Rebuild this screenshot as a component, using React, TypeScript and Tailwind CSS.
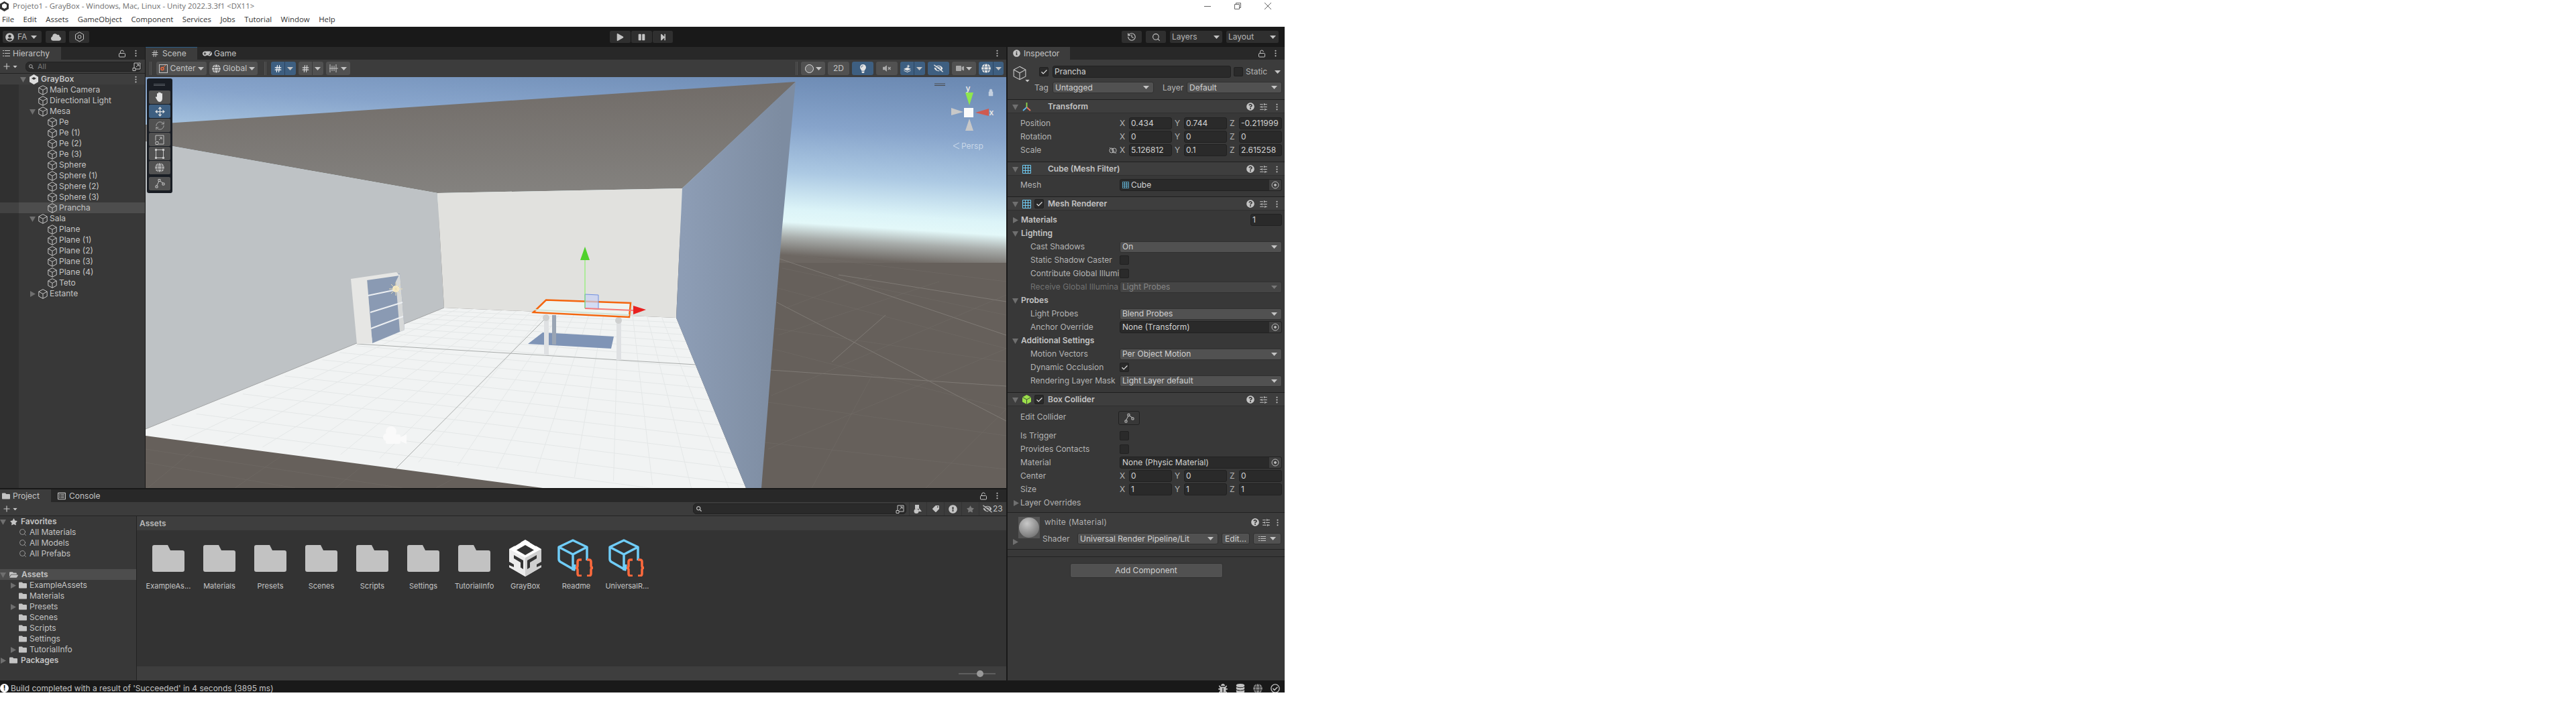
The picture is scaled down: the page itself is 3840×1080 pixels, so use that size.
import React from "react";
import {
  FaBug, FaCloud, FaDatabase, FaExclamationCircle, FaEyeSlash, FaFolder, FaFolderOpen,
  FaGamepad, FaGlobe, FaInfoCircle, FaLightbulb, FaPause, FaPlay, FaQuestionCircle, FaRegCheckCircle,
  FaRegListAlt, FaSearch, FaStar, FaStepForward, FaTag, FaUserCircle, FaVideo, FaVolumeMute,
} from "react-icons/fa";
import { Check, EllipsisVertical, Hash, History, LockOpen, Move, Plus, RefreshCw, Search, SlidersHorizontal } from "lucide-react";

const Caret = ({ className = "" }: { className?: string }) => (
  <svg width="9" height="5" viewBox="0 0 9 5" className={`shrink-0 ${className}`}>
    <path d="M0 0h9L4.5 5z" fill="#c4c4c4" />
  </svg>
);

const Tri = ({ open = true, className = "" }: { open?: boolean; className?: string }) => (
  <svg width="9" height="9" viewBox="0 0 9 9" className={`shrink-0 ${className}`}>
    <path d={open ? "M0 1h9L4.5 9z" : "M1 0l8 4.5L1 9z"} fill="#6f6f6f" />
  </svg>
);

const Cube = ({ color = "#c4c4c4" }: { color?: string }) => (
  <svg width="14" height="15" viewBox="0 0 14 15" className="shrink-0" fill="none" stroke={color} strokeWidth="1">
    <path d="M7 .7l6.2 3.3v7L7 14.3.8 11V4zM.8 4L7 7.4 13.2 4M7 7.4v6.9" />
  </svg>
);

const GridIcon = ({ size = 13 }: { size?: number }) => (
  <svg width={size} height={size} viewBox="0 0 13 13" fill="none" stroke="#6ecbf2" strokeWidth="1" className="shrink-0">
    <path d="M.5.5h12v12H.5zM4.5.5v12M8.5.5v12M.5 4.5h12M.5 8.5h12" />
  </svg>
);

const ExpandIcon = () => (
  <svg width="13" height="13" viewBox="0 0 13 13" fill="none" stroke="#c4c4c4" strokeWidth="1">
    <path d="M3 8V1h9v9H5M6 7l4-4M7 3h3v3M1 8.500h4v4H1z" />
  </svg>
);

const ToolNodes = () => (
  <svg width="16" height="16" viewBox="0 0 16 16" fill="none" stroke="#c4c4c4" strokeWidth="1">
    <path d="M2 14v-3h3v3zM12 10V7h3v3zM6 1.500h3v3H6zM3.500 11L7 4.500M9 4.500L13 7" />
  </svg>
);

const Target = () => (
  <svg width="12" height="12" viewBox="0 0 12 12" fill="none" stroke="#b8b8b8" strokeWidth="1">
    <circle cx="6" cy="6" r="5" />
    <circle cx="6" cy="6" r="1.500" fill="#b8b8b8" />
  </svg>
);

const Sep = () => <div className="w-[3px] h-[20px] border-x border-[#555]" />;

const TB = ({ w, active, children }: { w: string; active?: boolean; children: React.ReactNode }) => (
  <div className={`${w} ${active ? "bg-[#3e5f81]" : "bg-[#515151]"} h-[20px] rounded-[3px] flex items-center justify-center gap-[3px] text-[#c4c4c4] text-[12px] shrink-0`}>
    {children}
  </div>
);

const TopBtn = ({ w, children }: { w: string; children: React.ReactNode }) => (
  <div className={`${w} h-[18px] bg-[#2f2f2f] rounded-[2px] flex items-center text-[#b5b5b5] text-[12px] shrink-0`}>{children}</div>
);

const TitleBar = () => (
  <div className="h-[40px] bg-white border-b border-[#f0f0f0] shrink-0">
    <div className="h-[18px] flex items-center">
      <svg width="13" height="15" viewBox="0 0 13 15" className="shrink-0">
        <path d="M6.500 0L13 3.700v7.600L6.500 15 0 11.300V3.700z" fill="#333" />
        <path d="M6.500 3L10 5v4L6.500 11 3 9V5z" fill="#fff" />
      </svg>
      <span className="ml-[6px] text-[11.4px] text-[#6e6e6e] font-['Open_Sans',sans-serif]">Projeto1 - GrayBox - Windows, Mac, Linux - Unity 2022.3.3f1 &lt;DX11&gt;</span>
      <div className="ml-auto flex items-center w-[120px] gap-[35px]">
        <div className="w-[10px] h-px bg-[#666]" />
        <svg width="10" height="10" viewBox="0 0 10 10" fill="none" stroke="#666"><path d="M.5 2.500h7v7h-7zM2.500 2.500v-2h7v7h-2" /></svg>
        <svg width="10" height="10" viewBox="0 0 10 10" fill="none" stroke="#666"><path d="M0 0l10 10M10 0L0 10" /></svg>
      </div>
    </div>
    <div className="h-[21px] flex items-center gap-[13.500px] pl-[3px] text-[11.4px] text-[#333] font-['Open_Sans',sans-serif]">
      {["File", "Edit", "Assets", "GameObject", "Component", "Services", "Jobs", "Tutorial", "Window", "Help"].map((m) => (
        <span key={m}>{m}</span>
      ))}
    </div>
  </div>
);

const MainToolbar = () => (
  <div className="h-[30px] bg-[#191919] flex items-center pl-[4px] pr-[9px] shrink-0">
    <TopBtn w="w-[58px] px-[4px] gap-[5px]"><FaUserCircle size={13} color="#c4c4c4" /><span>FA</span><Caret className="ml-[1px]" /></TopBtn>
    <div className="w-[6px]" />
    <TopBtn w="w-[30px] justify-center"><FaCloud size={15} color="#c4c4c4" /></TopBtn>
    <div className="w-[5px]" />
    <TopBtn w="w-[30px] justify-center">
      <svg width="15" height="16" viewBox="0 0 15 16" fill="none" stroke="#c4c4c4"><path d="M7.500 1l6 3.500v7l-6 3.500-6-3.500v-7z" /><circle cx="7.500" cy="8" r="2.500" /></svg>
    </TopBtn>
    <div className="flex ml-[776px] gap-px">
      <TopBtn w="w-[31px] justify-center"><FaPlay size={11} color="#c4c4c4" /></TopBtn>
      <TopBtn w="w-[31px] justify-center"><FaPause size={11} color="#c4c4c4" /></TopBtn>
      <TopBtn w="w-[30px] justify-center"><FaStepForward size={11} color="#c4c4c4" /></TopBtn>
    </div>
    <div className="ml-auto flex gap-[6px]">
      <TopBtn w="w-[30px] justify-center"><History size={14} color="#c4c4c4" /></TopBtn>
      <TopBtn w="w-[30px] justify-center"><Search size={13} color="#c4c4c4" /></TopBtn>
      <TopBtn w="w-[78px] px-[3px] justify-between"><span>Layers</span><Caret className="mr-[1px]" /></TopBtn>
      <TopBtn w="w-[78px] px-[3px] justify-between"><span>Layout</span><Caret className="mr-[1px]" /></TopBtn>
    </div>
  </div>
);

const tree: [string, number, boolean?][] = [
  ["Main Camera", 1], ["Directional Light", 1], ["Mesa", 1, true], ["Pe", 2], ["Pe (1)", 2], ["Pe (2)", 2], ["Pe (3)", 2],
  ["Sphere", 2], ["Sphere (1)", 2], ["Sphere (2)", 2], ["Sphere (3)", 2], ["Prancha", 2], ["Sala", 1, true],
  ["Plane", 2], ["Plane (1)", 2], ["Plane (2)", 2], ["Plane (3)", 2], ["Plane (4)", 2], ["Teto", 2], ["Estante", 1, false],
];

const Hierarchy = () => (
  <div className="w-[216px] bg-[#383838] flex flex-col shrink-0">
    <div className="h-[19px] bg-[#282828] flex items-center shrink-0">
      <div className="w-[91px] h-full bg-[#3c3c3c] flex items-center gap-[4px] pl-[4px] text-[12px] text-[#c4c4c4]">
        <svg width="11" height="11" viewBox="0 0 11 11" stroke="#c4c4c4"><path d="M0 1.500h2M3 1.500h8M0 5.500h2M3 5.500h8M0 9.500h2M3 9.500h8" /></svg>
        Hierarchy
      </div>
      <div className="ml-auto flex items-center pr-[7px] gap-[8px]">
        <LockOpen size={12} color="#c4c4c4" />
        <EllipsisVertical size={13} color="#c4c4c4" />
      </div>
    </div>
    <div className="h-[21px] bg-[#3c3c3c] flex items-center pl-[3px] border-b border-[#232323] shrink-0">
      <Plus size={14} color="#c4c4c4" strokeWidth={2} />
      <Caret className="ml-[1px] scale-75" />
      <div className="ml-[11px] w-[173px] h-[15px] bg-[#2a2a2a] border border-[#212121] rounded-[6px] flex items-center pl-[4px] text-[11px] text-[#777]">
        <FaSearch size={7} color="#999" /><span className="ml-[6px]">All</span>
        <div className="ml-auto"><ExpandIcon /></div>
      </div>
    </div>
    <div className="h-[16px] bg-[#3e3e3e] flex items-center pl-[30px] text-[12px] font-semibold text-[#c4c4c4] shrink-0">
      <Tri />
      <svg width="13" height="15" viewBox="0 0 13 15" className="ml-[5px]"><path d="M6.500 0L13 3.700v7.600L6.500 15 0 11.300V3.700z" fill="#ddd" /><path d="M6.500 4L10 6 6.500 8 3 6z" fill="#383838" /></svg>
      <span className="ml-[4px]">GrayBox</span>
      <EllipsisVertical size={13} color="#c4c4c4" className="ml-auto mr-[7px]" />
    </div>
    {tree.map(([name, depth, open]) => {
      const sel = name === "Prancha";
      return (
        <div key={name} className="h-[16px] flex shrink-0 text-[12px] text-[#c4c4c4]">
          <div className={`w-[28px] ${sel ? "bg-[#424242]" : "bg-[#303030]"}`} />
          <div className={`flex-1 flex items-center ${sel ? "bg-[#4d4d4d]" : ""} ${depth === 1 ? "pl-[29px]" : "pl-[43px]"} relative`}>
            {open !== undefined && <Tri open={open} className="absolute left-[16px] top-[4px]" />}
            <Cube />
            <span className="ml-[3px]">{name}</span>
          </div>
        </div>
      );
    })}
    <div className="flex-1 flex">
      <div className="w-[28px] bg-[#303030]" />
    </div>
  </div>
);

const floorA = Array.from({ length: 17 }, (_, i) => {
  const t = (i + 1) / 18;
  const t2 = t * t * 0.6 + t * 0.4;
  return [662 - 445 * t2, 459 + 191 * t2, 1008 + 122 * t2, 474 + 300 * t2];
});
const floorB = Array.from({ length: 15 }, (_, i) => {
  const t = (i + 1) / 16;
  return [662 + 346 * t, 459 + 15 * t, 217 + 930 * t, 650 + 90 * t];
});

const SceneDrawing = () => (
  <svg viewBox="217 115 1283 613" width="1283" height="613" className="block">
    <defs>
      <linearGradient id="sky" gradientUnits="userSpaceOnUse" x1="1340" y1="115" x2="1323" y2="390">
        <stop offset="0" stopColor="#6c8ab3" />
        <stop offset="0.3" stopColor="#87a4cb" />
        <stop offset="0.55" stopColor="#acc9e3" />
        <stop offset="0.75" stopColor="#dcf4f8" />
        <stop offset="0.82" stopColor="#e3f8f9" />
        <stop offset="0.9" stopColor="#a9aeac" />
        <stop offset="1" stopColor="#6d6762" />
      </linearGradient>
      <linearGradient id="ceil" gradientUnits="userSpaceOnUse" x1="0" y1="122" x2="0" y2="288">
        <stop offset="0" stopColor="#716c68" />
        <stop offset="1" stopColor="#84827f" />
      </linearGradient>
      <linearGradient id="rwall" gradientUnits="userSpaceOnUse" x1="1017" y1="0" x2="1166" y2="0">
        <stop offset="0" stopColor="#8d9db5" />
        <stop offset="1" stopColor="#7d8ca1" />
      </linearGradient>
      <clipPath id="floorClip"><path d="M217 640L662 459 1008 474 1112 728H809L217 650z" /></clipPath>
    </defs>
    <rect x="217" y="115" width="1283" height="613" fill="url(#sky)" />
    <rect x="217" y="392" width="1283" height="336" fill="#66605b" />
    <g stroke="#7f7a75" strokeWidth="1">
      <path d="M1158 451L1500 628M1149 552L1500 576M1162 386L1500 500M1250 410L1500 450M1320 470L1240 540" fill="none" />
    </g>
    <g stroke="#76716c" strokeWidth="1" opacity="0.4" fill="none">
      <path d="M1166 400L1500 470M1160 430L1500 520M1155 490L1500 540M1150 520L1500 610M1145 600L1500 650M1140 660L1500 700M1180 380L1500 420M1300 410L1170 460M1400 420L1160 500M1500 440L1150 590M1500 520L1145 670M1500 610L1380 728M1300 560L1210 728" />
      <path d="M217 670L600 728M217 690L440 728M300 662L220 728M420 680L350 728M540 695L500 728M680 712L650 728" />
    </g>
    <path d="M217 186L1186 122 1017 281 652 288 217 211z" fill="url(#ceil)" />
    <path d="M217 211L652 288 662 459 217 640z" fill="#bec2c5" />
    <path d="M652 288L1017 281 1008 474 662 459z" fill="#e1e1de" />
    <path d="M217 640L662 459 1008 474 1112 728H809L217 650z" fill="#f1f3f3" />
    <path d="M1186 122L1017 281 1008 474 1112 728H1135L1166 339z" fill="url(#rwall)" />
    <g clipPath="url(#floorClip)" stroke="#e4e7e7" strokeWidth="1">
      {floorA.map((l, i) => <line key={i} x1={l[0]} y1={l[1]} x2={l[2]} y2={l[3]} />)}
      {floorB.map((l, i) => <line key={i} x1={l[0]} y1={l[1]} x2={l[2]} y2={l[3]} />)}
      <path d="M532 513L1037 544M812 476L590 699L560 728" stroke="#a9acab" fill="none" />
    </g>
    <path d="M217 640L662 459" stroke="#a7a9aa" fill="none" />
    {/* shelf */}
    <path d="M547 414L596 408 603 492 555 512z" fill="#8a9ab3" />
    <path d="M596 408L603 492 596 495 590 420z" fill="#d6d8d8" />
    <path d="M523 416L591 406 596 411 547 418 555 512 532 513z" fill="#e6e6e4" />
    <path d="M548 441L596 431M552 466L600 451M553 490L601 472" stroke="#eceff2" strokeWidth="2" fill="none" />
    <circle cx="590" cy="431" r="5" fill="#fbeec9" />
    <path d="M590 421v20M580 431h20M583 424l14 14M597 424l-14 14" stroke="#e8dcb4" strokeWidth="1" />
    {/* table */}
    <path d="M809 496L915 502 911 520 787 513z" fill="#7f94b6" />
    <path d="M823 470h6v44h-6z" fill="#9aa5b4" />
    <path d="M811 476h7v54h-7zM919 480h7v57h-7z" fill="#dfe1e3" />
    <circle cx="814" cy="474" r="5" fill="#cfd0d0" />
    <circle cx="922" cy="478" r="5" fill="#cfd0d0" />
    <path d="M814 447.500L940 452 938 473 795 466z" fill="#eef4f0" stroke="#f4660f" strokeWidth="2.500" />
    <path d="M796 462L938 470" stroke="#d3e2d6" strokeWidth="2" fill="none" />
    <path d="M872 439L892 440V461L872 460z" fill="#c8d2f5" fillOpacity="0.7" stroke="#6f8fe0" strokeWidth="1" />
    <path d="M872 388V460" stroke="#7cf25a" strokeWidth="1" />
    <path d="M872 368L879 388H865z" fill="#4fd12c" />
    <path d="M872 460L944 463" stroke="#f47a7a" strokeWidth="2" />
    <path d="M963 462L944 456V469z" fill="#e8201f" />
    {/* camera gizmo */}
    <g fill="#fafafa">
      <circle cx="583" cy="644" r="8" />
      <circle cx="577" cy="652" r="6" />
      <rect x="575" y="648" width="22" height="14" rx="2" />
      <path d="M597 652l9-4v14l-9-4z" />
    </g>
    {/* orientation gizmo */}
    <path d="M1393 125h16M1393 127.500h16" stroke="#4a4a4a" strokeWidth="1" />
    <path d="M1439 138H1451L1445 157z" fill="#8fe84d" />
    <path d="M1474 162V173L1454 168z" fill="#cf5a50" />
    <path d="M1418 161V172L1436 167z" fill="#c8c8c8" />
    <path d="M1439 195H1451L1445 177z" fill="#c8c8c8" />
    <rect x="1437" y="161" width="14" height="14" fill="#fafafa" />
    <text x="1443" y="136" fontSize="12" fill="#e6e6e6" fontWeight="600" textAnchor="middle" fontFamily="Inter, sans-serif">y</text>
    <text x="1478" y="172" fontSize="12" fill="#e6e6e6" fontWeight="600" textAnchor="middle" fontFamily="Inter, sans-serif">x</text>
    <path d="M1474 137h6v6h-6zM1475 137v-2a2 2 0 014 0v2" fill="#c4d0df" stroke="#c4d0df" strokeWidth="0.500" />
    <path d="M1430 213l-9 4.500 9 4.500" fill="none" stroke="#cfdcec" strokeWidth="1" />
    <text x="1433" y="222" fontSize="12" fill="#c8d7e8" fontFamily="Inter, sans-serif">Persp</text>
  </svg>
);

const toolCls = "h-[20px] w-[32px] rounded-[2px] flex items-center justify-center shrink-0";

const ScenePanel = () => (
  <div className="flex-1 min-w-0 flex flex-col">
    <div className="h-[19px] bg-[#282828] flex items-center shrink-0 text-[12px] text-[#c4c4c4]">
      <div className="w-[77px] h-full bg-[#3c3c3c] border-t border-[#2c5d87] flex items-center pl-[8px] gap-[5px]">
        <Hash size={12} color="#c4c4c4" />Scene
      </div>
      <div className="flex items-center pl-[8px] gap-[3px]">
        <FaGamepad size={14} color="#c4c4c4" />Game
      </div>
      <EllipsisVertical size={13} color="#c4c4c4" className="ml-auto mr-[7px]" />
    </div>
    <div className="h-[26px] bg-[#3c3c3c] flex items-center shrink-0 pl-[6px] pr-[4px]">
      <Sep />
      <div className="ml-[7px] flex gap-[4px]">
        <TB w="w-[75px]">
          <svg width="13" height="13" viewBox="0 0 13 13" fill="none"><rect x=".5" y=".5" width="12" height="12" stroke="#c4c4c4" /><circle cx="5" cy="6.500" r="2" stroke="#f0683a" strokeWidth="1.500" /><path d="M6 5l4-4" stroke="#f0683a" /></svg>
          Center<Caret />
        </TB>
        <TB w="w-[72px]"><FaGlobe size={13} color="#c4c4c4" />Global<Caret /></TB>
      </div>
      <div className="ml-[10px]"><Sep /></div>
      <div className="ml-[7px] flex gap-[4px]">
        <TB w="w-[37px]" active><Hash size={13} color="#fff" /><span className="w-px h-[20px] bg-[#2c4460]" /><Caret /></TB>
        <TB w="w-[37px]"><Hash size={13} color="#d8d8d8" /><span className="w-px h-[20px] bg-[#3a3a3a]" /><Caret /></TB>
        <TB w="w-[36px]">
          <svg width="14" height="14" viewBox="0 0 14 14" stroke="#c4c4c4" strokeWidth="1"><path d="M1 1v12M4 3v8M7 3v8M10 1v12M0 7h13" /></svg>
          <Caret />
        </TB>
      </div>
      <div className="ml-auto"><Sep /></div>
      <div className="ml-[5px] flex gap-[4px]">
        <TB w="w-[36px]"><span className="w-[13px] h-[13px] rounded-full border border-[#ddd] bg-[#6a6a6a]" /><Caret /></TB>
        <TB w="w-[32px]">2D</TB>
        <TB w="w-[32px]" active><FaLightbulb size={13} color="#e4e4e4" /></TB>
        <TB w="w-[32px]"><FaVolumeMute size={12} color="#a8a8a8" /></TB>
        <TB w="w-[37px]" active>
          <svg width="13" height="14" viewBox="0 0 13 14" fill="#e4e4e4"><path d="M1 8l5.500-2.500L12 8 6.500 10.500zM1 10.500l5.500 2.500 5.500-2.500-1-.5-4.500 2-4.500-2zM8 1l.7 2 2 .7-2 .7L8 6.400l-.7-2-2-.7 2-.7z" /></svg>
          <span className="w-px h-[20px] bg-[#2c4460]" /><Caret />
        </TB>
        <TB w="w-[32px]" active><FaEyeSlash size={14} color="#e4e4e4" /></TB>
        <TB w="w-[36px]"><FaVideo size={12} color="#a8a8a8" /><Caret /></TB>
        <TB w="w-[37px]" active><FaGlobe size={14} color="#e4e4e4" /><span className="w-px h-[20px] bg-[#2c4460]" /><Caret /></TB>
      </div>
    </div>
    <div className="flex-1 relative overflow-hidden bg-[#66605b]">
      <SceneDrawing />
      <div className="absolute left-[2px] top-[2px] w-[38px] h-[171px] bg-[#191d24] rounded-[3px] flex flex-col items-center pt-[18px] gap-px">
        <div className="absolute top-[8px] left-[10px] w-[17px] h-[3px] border-y border-[#5a5f66]" />
        <div className={`${toolCls} bg-[#515151]`}>
          <svg width="14" height="16" viewBox="0 0 14 16" fill="#e4e4e4"><path d="M3 8V3a1 1 0 012 0V1.500a1 1 0 012 0V2a1 1 0 012 0v1a1 1 0 012 0v7c0 3-2 5-4 5s-3-1-4-3L1 8.500c-.5-1 .8-1.800 1.500-1z" /></svg>
        </div>
        <div className={`${toolCls} bg-[#3e5f81]`}><Move size={15} color="#e4e4e4" /></div>
        <div className={`${toolCls} bg-[#515151]`}><RefreshCw size={15} color="#c4c4c4" strokeWidth={1.200} /></div>
        <div className={`${toolCls} bg-[#515151]`}>
          <svg width="14" height="15" viewBox="0 0 14 15" fill="none" stroke="#c4c4c4"><path d="M1 9V1h12v13H6M6 8l4-4M7 4h3v3M1 10.500h4v4H1z" /></svg>
        </div>
        <div className={`${toolCls} bg-[#515151]`}>
          <svg width="14" height="15" viewBox="0 0 14 15" fill="none" stroke="#c4c4c4"><path d="M3 1.500h8M3 13.500h8M1.500 3v9M12.500 3v9" /><path d="M0 0h3v3H0zM11 0h3v3h-3zM0 12h3v3H0zM11 12h3v3h-3z" fill="#c4c4c4" stroke="none" /></svg>
        </div>
        <div className={`${toolCls} bg-[#515151]`}><FaGlobe size={14} color="#b0b0b0" /></div>
        <div className={`${toolCls} bg-[#515151] mt-[3px]`}><ToolNodes /></div>
      </div>
    </div>
  </div>
);

const favs = ["All Materials", "All Models", "All Prefabs"];
const folders: [string, boolean][] = [
  ["ExampleAssets", true], ["Materials", false], ["Presets", true], ["Scenes", false], ["Scripts", false], ["Settings", false], ["TutorialInfo", true],
];

const BigFolder = () => (
  <svg width="48" height="40" viewBox="0 0 48 40" className="block">
    <path d="M3 0h20l4 8h18a3 3 0 013 3v26a3 3 0 01-3 3H3a3 3 0 01-3-3V3a3 3 0 013-3z" fill="#c2c2c2" />
  </svg>
);

const UnityLogo = () => (
  <svg width="48" height="55" viewBox="0 0 48 55" className="block">
    <path d="M24 0l24 14v27L24 55 0 41V14z" fill="#ffffff" />
    <path d="M24 27L0 14v27l24 14z" fill="#ececec" />
    <path d="M24 27l24-13v27L24 55z" fill="#cfcfcf" />
    <path d="M24 8l13 7.500L24 23 11 15.500z" fill="#333333" />
    <path d="M17 3.500L8 9M31 3.500L40 9" stroke="#333333" strokeWidth="1.500" fill="none" />
    <path d="M7 23l14 8v13l-4-2.500V34L7 28zM41 23L27 31v13l4-2.500V34l10-6z" fill="#333333" />
    <path d="M0 33l7 4v4l-7-3zM48 33l-7 4v4l7-3z" fill="#333333" />
  </svg>
);

const ScriptIcon = () => (
  <svg width="56" height="56" viewBox="0 0 56 56" className="block" fill="none">
    <path d="M26 38l-1 8-20-11.500c-2-1-3-2.500-3-4.500V12L23 2l21 10v20M2 12l21 11 21-11M23 23v24" stroke="#70cdf8" strokeWidth="3.500" strokeLinejoin="round" />
    <path d="M36 31h-3c-2 0-3 1-3 3v6c0 2-1 3-3 3 2 0 3 1 3 3v6c0 2 1 3 3 3h3M44 31h3c2 0 3 1 3 3v6c0 2 1 3 3 3-2 0-3 1-3 3v6c0 2-1 3-3 3h-3" stroke="#ff6a3d" strokeWidth="3.500" />
  </svg>
);

const assets = ["ExampleAs...", "Materials", "Presets", "Scenes", "Scripts", "Settings", "TutorialInfo", "GrayBox", "Readme", "UniversalR..."];

const ProjectPanel = () => (
  <div className="h-[285px] flex flex-col shrink-0 mt-[2px]">
    <div className="h-[19px] bg-[#282828] flex items-center shrink-0 text-[12px] text-[#c4c4c4]">
      <div className="w-[76px] h-full bg-[#3c3c3c] flex items-center pl-[3px] gap-[4px]"><FaFolder size={12} color="#c4c4c4" />Project</div>
      <div className="pl-[10px] flex items-center gap-[5px]"><FaRegListAlt size={12} color="#c4c4c4" />Console</div>
      <div className="ml-auto flex items-center pr-[7px] gap-[8px]">
        <LockOpen size={12} color="#c4c4c4" />
        <EllipsisVertical size={13} color="#c4c4c4" />
      </div>
    </div>
    <div className="h-[21px] bg-[#3c3c3c] border-b border-[#232323] flex items-center pl-[3px] shrink-0">
      <Plus size={14} color="#c4c4c4" strokeWidth={2} />
      <Caret className="ml-[1px] scale-75" />
      <div className="ml-auto w-[318px] h-[16px] bg-[#2a2a2a] border border-[#212121] rounded-[5px] flex items-center pl-[4px] mr-[4px]">
        <FaSearch size={8} color="#bbb" />
        <div className="ml-auto mr-[2px]"><ExpandIcon /></div>
      </div>
      <div className="flex h-full text-[#c4c4c4]">
        <div className="w-[26px] border-l border-[#333] flex items-center justify-center">
          <svg width="13" height="13" viewBox="0 0 13 13" fill="#c4c4c4"><rect x="2" y="0" width="6" height="6" /><circle cx="4" cy="9.500" r="3.500" /><path d="M8 5l4 5H7z" /></svg>
        </div>
        <div className="w-[26px] border-l border-[#333] flex items-center justify-center"><FaTag size={10} color="#c4c4c4" className="rotate-90" /></div>
        <div className="w-[26px] border-l border-[#333] flex items-center justify-center"><FaExclamationCircle size={13} color="#c4c4c4" /></div>
        <div className="w-[26px] border-l border-[#333] flex items-center justify-center"><FaStar size={11} color="#7a7a7a" /></div>
        <div className="w-[41px] border-l border-[#333] flex items-center pl-[5px] gap-px text-[12px]"><FaEyeSlash size={14} color="#b8b8b8" />23</div>
      </div>
    </div>
    <div className="flex-1 min-h-0 flex">
      <div className="w-[203px] bg-[#383838] border-r border-[#232323] box-content text-[12px] text-[#c4c4c4] shrink-0">
        <div className="h-[16px] flex items-center font-semibold">
          <Tri /><FaStar size={11} color="#c4c4c4" className="ml-[6px]" /><span className="ml-[5px]">Favorites</span>
        </div>
        {favs.map((f) => (
          <div key={f} className="h-[16px] flex items-center pl-[28px]"><Search size={12} color="#c4c4c4" strokeWidth={1.300} /><span className="ml-[4px]">{f}</span></div>
        ))}
        <div className="h-[15px]" />
        <div className="h-[16px] bg-[#4d4d4d] flex items-center font-semibold">
          <Tri /><FaFolderOpen size={13} color="#c4c4c4" className="ml-[5px]" /><span className="ml-[5px]">Assets</span>
        </div>
        {folders.map(([f, hasKids]) => (
          <div key={f} className="h-[16px] flex items-center relative pl-[28px]">
            {hasKids && <Tri open={false} className="absolute left-[15px] top-[4px]" />}
            <FaFolder size={12} color="#c4c4c4" /><span className="ml-[4px]">{f}</span>
          </div>
        ))}
        <div className="h-[16px] flex items-center font-semibold">
          <Tri open={false} /><FaFolder size={12} color="#c4c4c4" className="ml-[5px]" /><span className="ml-[5px]">Packages</span>
        </div>
      </div>
      <div className="flex-1 min-w-0 flex flex-col">
        <div className="h-[21px] bg-[#3e3e3e] flex items-center pl-[4px] text-[12px] font-semibold text-[#b8b8b8] shrink-0">Assets</div>
        <div className="flex-1 bg-[#333333] flex pl-[9px] pt-[14px]">
          {assets.map((a, i) => (
            <div key={a} className="w-[76px] flex flex-col items-center">
              <div className="h-[55px] flex items-end">
                {i < 7 && <div className="pb-[7px]"><BigFolder /></div>}
                {i === 7 && <UnityLogo />}
                {i > 7 && <ScriptIcon />}
              </div>
              <span className="mt-[6px] text-[11px] text-[#c4c4c4] whitespace-nowrap">{a}</span>
            </div>
          ))}
        </div>
        <div className="h-[21px] bg-[#3e3e3e] flex items-center justify-end pr-[16px] shrink-0">
          <div className="w-[55px] h-[2px] bg-[#5e5e5e] relative">
            <div className="absolute left-[27px] top-[-4px] w-[10px] h-[10px] rounded-full bg-[#999]" />
          </div>
        </div>
      </div>
    </div>
  </div>
);

const Label = ({ children, indent = "pl-[19px]", dim }: { children: React.ReactNode; indent?: string; dim?: boolean }) => (
  <div className={`w-[167px] shrink-0 ${indent} ${dim ? "text-[#727272]" : "text-[#b4b4b4]"} whitespace-nowrap`}>{children}</div>
);

const Row = ({ children }: { children: React.ReactNode }) => <div className="h-[20px] flex items-center text-[12px]">{children}</div>;

const Field = ({ value, className = "" }: { value: string; className?: string }) => (
  <div className={`h-[18px] bg-[#2a2a2a] border border-[#212121] rounded-[3px] px-[2px] flex items-center text-[12px] text-[#d2d2d2] whitespace-nowrap overflow-hidden ${className}`}>{value}</div>
);

const Select = ({ value, dim, className = "w-[242px]" }: { value: string; dim?: boolean; className?: string }) => (
  <div className={`h-[17px] ${dim ? "bg-[#454545] text-[#858585]" : "bg-[#515151] text-[#d2d2d2]"} border border-[#303030] rounded-[3px] pl-[3px] pr-[6px] flex items-center justify-between text-[12px] ${className}`}>
    <span>{value}</span><Caret className={dim ? "opacity-40" : ""} />
  </div>
);

const Checkbox = ({ on }: { on?: boolean }) => (
  <div className="w-[14px] h-[14px] bg-[#2a2a2a] border border-[#212121] rounded-[2px] flex items-center justify-center shrink-0">
    {on && <Check size={11} color="#e4e4e4" strokeWidth={2.500} />}
  </div>
);

const ObjField = ({ value, icon }: { value: string; icon?: React.ReactNode }) => (
  <div className="w-[242px] h-[18px] bg-[#2a2a2a] border border-[#212121] rounded-[3px] flex items-center text-[12px] text-[#d2d2d2] pl-[3px]">
    {icon}<span className={icon ? "ml-[3px]" : ""}>{value}</span>
    <div className="ml-auto w-[18px] h-full bg-[#3e3e3e] flex items-center justify-center rounded-r-[3px]"><Target /></div>
  </div>
);

const Xyz = ({ x, y, z }: { x: string; y: string; z: string }) => (
  <div className="w-[242px] flex gap-[4px]">
    {[["X", x], ["Y", y], ["Z", z]].map(([k, v]) => (
      <div key={k} className="flex-1 min-w-0 flex items-center">
        <span className="w-[14px] text-[#b4b4b4] shrink-0">{k}</span>
        <Field value={v} className="flex-1 min-w-0" />
      </div>
    ))}
  </div>
);

const HeadIcons = ({ className = "gap-[7px] pr-[5px]" }: { className?: string }) => (
  <div className={`ml-auto flex items-center ${className}`}>
    <FaQuestionCircle size={12} color="#c4c4c4" />
    <SlidersHorizontal size={13} color="#c4c4c4" />
    <EllipsisVertical size={13} color="#c4c4c4" />
  </div>
);

const CompHeader = ({ title, icon, check }: { title: string; icon: React.ReactNode; check?: boolean }) => (
  <div className="h-[21px] bg-[#3e3e3e] border-t border-[#1f1f1f] border-b-[#2f2f2f] border-b flex items-center text-[12px] font-semibold text-[#c4c4c4] pt-[1px]">
    <Tri className="ml-[7px]" />
    <div className="ml-[5px] w-[14px] flex justify-center">{icon}</div>
    <div className="ml-[5px] w-[15px]">{check && <Checkbox on />}</div>
    <span className="ml-[5px]">{title}</span>
    <HeadIcons />
  </div>
);

const Section = ({ title }: { title: string }) => (
  <Row><Tri className="ml-[7px]" /><span className="ml-[4px] font-semibold text-[#c4c4c4]">{title}</span></Row>
);

const sub = "pl-[34px]";

const Inspector = () => (
  <div className="flex-1 min-w-0 ml-[2px] bg-[#383838] flex flex-col overflow-hidden">
    <div className="h-[19px] bg-[#282828] flex items-center shrink-0 text-[12px] text-[#c4c4c4]">
      <div className="w-[93px] h-full bg-[#3c3c3c] flex items-center pl-[8px] gap-[5px]"><FaInfoCircle size={11} color="#c4c4c4" />Inspector</div>
      <div className="ml-auto flex items-center pr-[7px] gap-[8px]">
        <LockOpen size={12} color="#c4c4c4" />
        <EllipsisVertical size={13} color="#c4c4c4" />
      </div>
    </div>
    <div className="h-[59px] bg-[#3c3c3c] shrink-0 flex text-[12px] text-[#b4b4b4] relative pl-[8px] pt-[9px]">
      <div className="w-[24px] relative">
        <svg width="20" height="22" viewBox="0 0 14 15" fill="none" stroke="#c4c4c4" strokeWidth="0.800"><path d="M7 .7l6.2 3.300v7L7 14.300.8 11V4zM.8 4L7 7.400 13.200 4M7 7.400v6.900" /></svg>
        <Caret className="absolute left-[17px] top-[20px] scale-75" />
      </div>
      <div className="flex-1 min-w-0 pl-[8px] pr-[4px]">
        <div className="h-[18px] flex items-center">
          <div className="ml-[7px]"><Checkbox on /></div>
          <Field value="Prancha" className="ml-[6px] w-[266px]" />
          <div className="ml-[4px]"><Checkbox /></div>
          <span className="ml-[4px]">Static</span>
          <Caret className="ml-auto mr-[2px]" />
        </div>
        <div className="h-[17px] mt-[6px] flex items-center">
          <span className="w-[27px]">Tag</span>
          <Select value="Untagged" className="w-[151px]" />
          <span className="ml-[13px] w-[36px]">Layer</span>
          <Select value="Default" className="w-[142px]" />
        </div>
      </div>
    </div>
    <CompHeader title="Transform" icon={
      <svg width="13" height="13" viewBox="0 0 13 13" strokeWidth="1.800" fill="none"><path d="M6.500 7V0" stroke="#8fd84a" /><path d="M6.500 7L1 12" stroke="#5ab8ee" /><path d="M6.500 7L12 12" stroke="#e8765c" /></svg>
    } />
    <div className="pt-[5px] pb-[7px]">
      <Row><Label>Position</Label><Xyz x="0.434" y="0.744" z="-0.211999" /></Row>
      <Row><Label>Rotation</Label><Xyz x="0" y="0" z="0" /></Row>
      <Row>
        <div className="w-[167px] shrink-0 flex items-center pl-[19px] text-[#b4b4b4] pr-[4px]">
          Scale
          <svg width="12" height="9" viewBox="0 0 12 9" fill="none" stroke="#b4b4b4" className="ml-auto"><rect x="1" y="1" width="6" height="7" rx="3" /><rect x="5" y="1" width="6" height="7" rx="3" /><path d="M1 0l10 9" /></svg>
        </div>
        <Xyz x="5.126812" y="0.1" z="2.615258" />
      </Row>
    </div>
    <CompHeader title="Cube (Mesh Filter)" icon={<GridIcon />} />
    <div className="pt-[4px] pb-[7px]">
      <Row><Label>Mesh</Label><ObjField value="Cube" icon={<GridIcon size={10} />} /></Row>
    </div>
    <CompHeader title="Mesh Renderer" check icon={<GridIcon />} />
    <div className="pt-[4px] pb-[7px]">
      <Row>
        <Tri open={false} className="ml-[7px]" />
        <span className="ml-[4px] font-semibold text-[#c4c4c4]">Materials</span>
        <Field value="1" className="ml-auto mr-[4px] w-[47px]" />
      </Row>
      <Section title="Lighting" />
      <Row><Label indent={sub}>Cast Shadows</Label><Select value="On" /></Row>
      <Row><Label indent={sub}>Static Shadow Caster</Label><Checkbox /></Row>
      <Row><Label indent={sub}>Contribute Global Illumi</Label><Checkbox /></Row>
      <Row><Label indent={sub} dim>Receive Global Illumina</Label><Select value="Light Probes" dim /></Row>
      <Section title="Probes" />
      <Row><Label indent={sub}>Light Probes</Label><Select value="Blend Probes" /></Row>
      <Row><Label indent={sub}>Anchor Override</Label><ObjField value="None (Transform)" /></Row>
      <Section title="Additional Settings" />
      <Row><Label indent={sub}>Motion Vectors</Label><Select value="Per Object Motion" /></Row>
      <Row><Label indent={sub}>Dynamic Occlusion</Label><Checkbox on /></Row>
      <Row><Label indent={sub}>Rendering Layer Mask</Label><Select value="Light Layer default" /></Row>
    </div>
    <CompHeader title="Box Collider" check icon={
      <svg width="13" height="14" viewBox="0 0 14 15"><path d="M7 0l7 3.700v7.600L7 15 0 11.300V3.700z" fill="#9be04a" /><path d="M0 3.700L7 7.500l7-3.800M7 7.500V15" stroke="#3c3c3c" fill="none" /></svg>
    } />
    <div className="pt-[7px] pb-[4px]">
      <div className="h-[21px] flex text-[12px] mb-[6px]">
        <div className="w-[165px] pl-[19px] text-[#b4b4b4]">Edit Collider</div>
        <div className="w-[32px] h-[21px] bg-[#383838] border border-[#212121] rounded-[3px] flex items-center justify-center"><ToolNodes /></div>
      </div>
      <Row><Label>Is Trigger</Label><Checkbox /></Row>
      <Row><Label>Provides Contacts</Label><Checkbox /></Row>
      <Row><Label>Material</Label><ObjField value="None (Physic Material)" /></Row>
      <Row><Label>Center</Label><Xyz x="0" y="0" z="0" /></Row>
      <Row><Label>Size</Label><Xyz x="1" y="1" z="1" /></Row>
      <Row>
        <Tri open={false} className="ml-[8px]" />
        <span className="ml-[2px] text-[#b4b4b4]">Layer Overrides</span>
      </Row>
    </div>
    <div className="h-[56px] bg-[#3c3c3c] border-y border-[#222] flex relative text-[12px] shrink-0">
      <Tri open={false} className="absolute left-[7px] top-[39px]" />
      <div className="ml-[16px] mt-[6px] w-[32px] h-[32px] bg-[#555] flex items-center justify-center shrink-0">
        <div className="w-[30px] h-[30px] rounded-full bg-[radial-gradient(circle_at_40%_30%,#c8c8c8,#8a8a8a_60%,#5e5e5e)]" />
      </div>
      <div className="flex-1 min-w-0 pl-[7px] pr-[4px]">
        <div className="h-[18px] mt-[5px] flex items-center text-[#b0b0b0] tracking-[0.3px]">
          white (Material)
          <HeadIcons className="gap-[4px] pr-[0px]" />
        </div>
        <div className="flex items-center mt-[7px] h-[17px] -ml-[3px]">
          <span className="w-[52px] text-[#b4b4b4]">Shader</span>
          <Select value="Universal Render Pipeline/Lit" className="w-[210px]" />
          <div className="ml-[5px] w-[42px] h-[17px] bg-[#515151] border border-[#303030] rounded-[3px] flex items-center justify-center text-[#d2d2d2]">Edit...</div>
          <div className="ml-[5px] w-[42px] h-[17px] bg-[#515151] border border-[#303030] rounded-[3px] flex items-center justify-between px-[7px]">
            <svg width="11" height="9" viewBox="0 0 11 9" stroke="#c4c4c4"><path d="M0 1.500h2M3 1.500h8M0 4.500h2M3 4.500h8M0 7.500h2M3 7.500h8" /></svg>
            <Caret />
          </div>
        </div>
      </div>
    </div>
    <div className="h-[11px] border-b border-[#222] shrink-0" />
    <div className="pt-[9px] flex justify-center">
      <div className="w-[228px] h-[22px] bg-[#515151] border border-[#303030] rounded-[3px] flex items-center justify-center text-[12px] text-[#d2d2d2]">Add Component</div>
    </div>
  </div>
);

const StatusBar = () => (
  <div className="h-[18px] bg-[#191919] flex items-start overflow-hidden shrink-0 pt-[5px]">
    <div className="w-[13px] h-[13px] rounded-full bg-white flex items-center justify-center text-[#191919] text-[11px] font-bold leading-none shrink-0">!</div>
    <span className="ml-[3px] text-[12px] leading-[15px] text-[#c4c4c4] -mt-[1px] whitespace-nowrap">Build completed with a result of 'Succeeded' in 4 seconds (3895 ms)</span>
    <div className="ml-auto flex items-start pr-[7px] gap-[12px]">
      <FaBug size={14} color="#c4c4c4" />
      <FaDatabase size={14} color="#c4c4c4" />
      <FaGlobe size={14} color="#8a8a8a" />
      <FaRegCheckCircle size={14} color="#c4c4c4" />
    </div>
  </div>
);

export default function App() {
  return (
    <div className="w-[3840px] h-[1080px] bg-white font-['Inter',sans-serif]">
      <div className="w-[1915px] h-[1033px] flex flex-col bg-[#191919]">
        <TitleBar />
        <MainToolbar />
        <div className="flex-1 min-h-0 flex">
          <div className="w-[1500px] flex flex-col shrink-0">
            <div className="flex-1 min-h-0 flex gap-px">
              <Hierarchy />
              <ScenePanel />
            </div>
            <ProjectPanel />
          </div>
          <Inspector />
        </div>
        <StatusBar />
      </div>
    </div>
  );
}
